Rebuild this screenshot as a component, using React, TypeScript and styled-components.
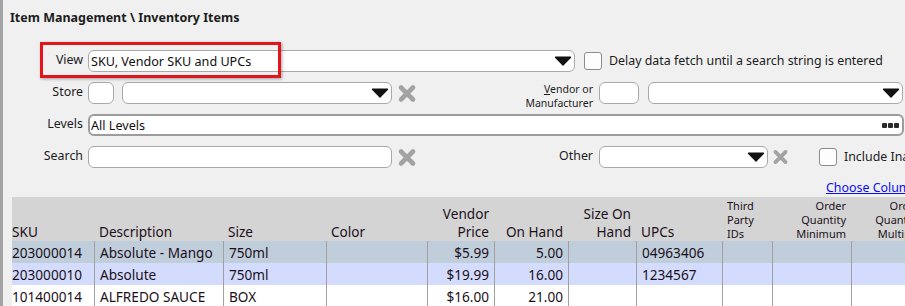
import React from 'react';
import styled, { createGlobalStyle } from 'styled-components';

const GlobalStyle = createGlobalStyle`
  html, body { margin: 0; padding: 0; background: #f0f0f0; overflow: hidden; }
  body { font-family: "Noto Sans", "Open Sans", sans-serif; color: #1c1c1c; }
  * { box-sizing: border-box; }
`;

const Page = styled.div`
  position: relative;
  display: flex;
  width: 905px;
  height: 306px;
  overflow: hidden;
  background: #f0f0f0;
`;

const SideBar = styled.div`
  flex: none;
  width: 3px;
  background: #a3a3a3;
`;

const Content = styled.div`
  flex: 1;
  min-width: 0;
  padding-left: 7px;
  display: flex;
  flex-direction: column;
`;

const Title = styled.div`
  margin-top: 8px;
  height: 20px;
  line-height: 20px;
  font-size: 12.5px;
  font-weight: 700;
  white-space: nowrap;
`;

const Form = styled.div`
  margin-top: 22px;
  display: flex;
  flex-direction: column;
  gap: 10px;
`;

const Row = styled.div`
  display: flex;
  align-items: center;
  height: 22px;
  white-space: nowrap;
  font-size: 12.4px;
`;

const Label = styled.div`
  flex: none;
  width: 73px;
  margin-right: 5px;
  text-align: right;
  padding-bottom: 4px;
`;

const MidLabel = styled.div<{ $small?: boolean }>`
  flex: none;
  width: 176px;
  margin-right: 6px;
  text-align: right;
  align-self: ${p => (p.$small ? 'flex-start' : 'center')};
  font-size: ${p => (p.$small ? '10.5px' : 'inherit')};
  line-height: ${p => (p.$small ? '14px' : 'normal')};
  padding-bottom: ${p => (p.$small ? '0' : '4px')};
  u { text-decoration-thickness: 1px; text-underline-offset: 1px; }
`;

const Box = styled.div<{ $w: number; $thick?: boolean; $gap?: number }>`
  flex: none;
  width: ${p => p.$w}px;
  height: 22px;
  margin-left: ${p => p.$gap ?? 0}px;
  background: #fff;
  border: ${p => (p.$thick ? '2px solid #9c9c9c' : '1px solid #a9a9a9')};
  border-radius: 6px;
  display: flex;
  align-items: center;
  padding: 0 2px 0 ${p => (p.$thick ? 1 : 2)}px;
  font-size: 12.6px;
  color: #101010;
  overflow: hidden;
`;

const BoxText = styled.span`
  flex: 1;
  min-width: 0;
  overflow: hidden;
`;

const Arrow = styled.svg`
  flex: none;
  width: 18px;
  height: 10px;
`;

const Dots = styled.div`
  flex: none;
  display: flex;
  gap: 1px;
  margin-right: 1px;
  span { width: 5px; height: 5px; background: #2a2a2a; border-radius: 1px; }
`;

const ClearIcon = styled.svg<{ $gap?: number }>`
  flex: none;
  margin-left: ${p => p.$gap ?? 5}px;
`;

const Check = styled.div<{ $gap: number }>`
  flex: none;
  width: 18px;
  height: 18px;
  margin-left: ${p => p.$gap}px;
  margin-right: 7px;
  background: #fdfdfd;
  border: 1px solid #8c8c8c;
  border-radius: 3px;
`;

const CheckText = styled.span`
  padding-bottom: 2px;
`;

const LinkRow = styled.div`
  margin-top: 10px;
  height: 19px;
  line-height: 19px;
  padding-left: 816px;
  white-space: nowrap;
  font-size: 12.4px;
  a { color: #0b0bf0; text-decoration: underline; text-underline-offset: 1px; }
`;

const Highlight = styled.div`
  position: absolute;
  left: 40px;
  top: 42px;
  width: 241px;
  height: 36px;
  border: 3px solid #e3151c;
  box-shadow: 1px 1px 3px rgba(0, 0, 0, 0.35);
  pointer-events: none;
`;

const cols = [82, 129, 103, 101, 67, 74, 68, 86, 50, 79, 74];
const template = cols.map(c => `${c}px`).join(' ');

const Table = styled.div`
  margin-left: 2px;
  width: 913px;
  font-size: 13.6px;
`;

const HeadRow = styled.div`
  display: grid;
  grid-template-columns: ${template};
  height: 44px;
  background: #d4d4d4;
`;

const BodyRow = styled.div<{ $bg: string }>`
  display: grid;
  grid-template-columns: ${template};
  height: 22px;
  background: ${p => p.$bg};
`;

const HeadCell = styled.div<{ $right?: boolean; $small?: boolean; $first?: boolean }>`
  display: flex;
  flex-direction: column;
  justify-content: flex-end;
  align-items: ${p => (p.$right ? 'flex-end' : 'flex-start')};
  padding: 0 5px 0 ${p => (p.$first ? 0 : 5)}px;
  font-size: ${p => (p.$small ? '11px' : 'inherit')};
  line-height: ${p => (p.$small ? '14px' : '18px')};
  color: #1c1020;
  white-space: nowrap;
  overflow: hidden;
`;

const Cell = styled.div<{ $right?: boolean; $first?: boolean }>`
  display: flex;
  align-items: center;
  justify-content: ${p => (p.$right ? 'flex-end' : 'flex-start')};
  padding: 0 5px 0 ${p => (p.$first ? 0 : 5)}px;
  border-left: ${p => (p.$first ? 'none' : '1px solid #a0a0a0')};
  color: #1c1020;
  white-space: nowrap;
  overflow: hidden;
`;

const DropArrow = () => (
  <Arrow viewBox="0 0 18 10">
    <path d="M1.5 1.2 H16.5 L9 9 Z" fill="#111" stroke="#111" strokeWidth="1.4" strokeLinejoin="round" />
  </Arrow>
);

const ClearX = ({ size = 20, gap }: { size?: number; gap?: number }) => (
  <ClearIcon $gap={gap} width={size} height={size - 1} viewBox="0 0 20 19">
    <path d="M4 3.5 L16 15.5 M16 3.5 L4 15.5" stroke="#a3a3a3" strokeWidth="4.6" strokeLinecap="round" />
  </ClearIcon>
);

type Col = { lines: string[]; right?: boolean; small?: boolean };
const headers: Col[] = [
  { lines: ['SKU'] },
  { lines: ['Description'] },
  { lines: ['Size'] },
  { lines: ['Color'] },
  { lines: ['Vendor', 'Price'], right: true },
  { lines: ['On Hand'], right: true },
  { lines: ['Size On', 'Hand'], right: true },
  { lines: ['UPCs'] },
  { lines: ['Third', 'Party', 'IDs'], small: true },
  { lines: ['Order', 'Quantity', 'Minimum'], small: true, right: true },
  { lines: ['Order', 'Quantity', 'Multiple'], small: true, right: true },
];
const rightCols = [4, 5, 6, 9, 10];

const rows = [
  { bg: '#c0cedb', cells: ['203000014', 'Absolute - Mango', '750ml', '', '$5.99', '5.00', '', '04963406', '', '', ''] },
  { bg: '#d3dcfc', cells: ['203000010', 'Absolute', '750ml', '', '$19.99', '16.00', '', '1234567', '', '', ''] },
  { bg: '#ffffff', cells: ['101400014', 'ALFREDO SAUCE', 'BOX', '', '$16.00', '21.00', '', '', '', '', ''] },
];

export default function App() {
  return (
    <Page>
      <GlobalStyle />
      <SideBar />
      <Content>
        <Title>Item Management \ Inventory Items</Title>
        <Form>
          <Row>
            <Label>View</Label>
            <Box $w={487}>
              <BoxText>SKU, Vendor SKU and UPCs</BoxText>
              <DropArrow />
            </Box>
            <Check $gap={9} />
            <CheckText>Delay data fetch until a search string is entered</CheckText>
          </Row>
          <Row>
            <Label>Store</Label>
            <Box $w={26} />
            <Box $w={270} $gap={8}>
              <BoxText />
              <DropArrow />
            </Box>
            <ClearX />
            <MidLabel $small>
              <u>V</u>endor or
              <br />
              Manufacturer
            </MidLabel>
            <Box $w={40} />
            <Box $w={255} $gap={9}>
              <BoxText />
              <DropArrow />
            </Box>
          </Row>
          <Row>
            <Label>Levels</Label>
            <Box $w={816} $thick>
              <BoxText>All Levels</BoxText>
              <Dots>
                <span />
                <span />
                <span />
              </Dots>
            </Box>
          </Row>
          <Row>
            <Label>Search</Label>
            <Box $w={304} />
            <ClearX />
            <MidLabel>Other</MidLabel>
            <Box $w={169}>
              <BoxText />
              <DropArrow />
            </Box>
            <ClearX size={17} gap={4} />
            <Check $gap={30} />
            <CheckText>Include Inactive Items</CheckText>
          </Row>
        </Form>
        <LinkRow>
          <a href="#">Choose Columns</a>
        </LinkRow>
        <Table>
          <HeadRow>
            {headers.map((h, i) => (
              <HeadCell key={i} $right={h.right} $small={h.small} $first={i === 0}>
                {h.lines.map((l, j) => (
                  <span key={j}>{l}</span>
                ))}
              </HeadCell>
            ))}
          </HeadRow>
          {rows.map((r, ri) => (
            <BodyRow key={ri} $bg={r.bg}>
              {r.cells.map((c, ci) => (
                <Cell key={ci} $first={ci === 0} $right={rightCols.includes(ci)}>
                  {c}
                </Cell>
              ))}
            </BodyRow>
          ))}
        </Table>
      </Content>
      <Highlight />
    </Page>
  );
}
